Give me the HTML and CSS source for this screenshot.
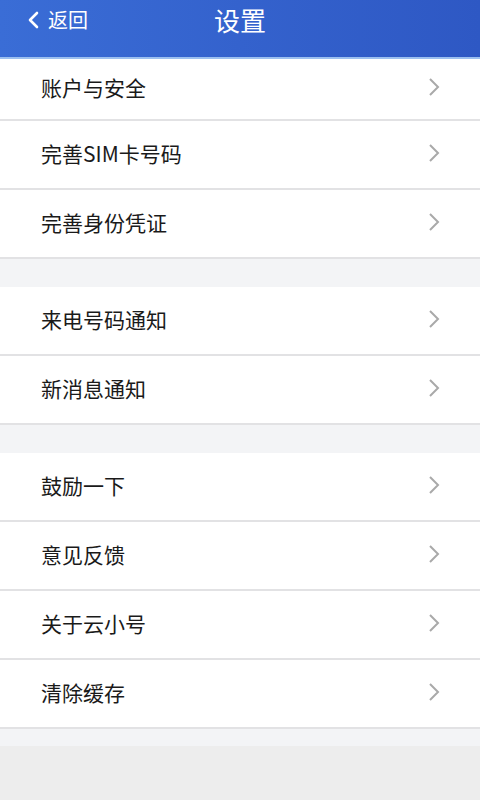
FILE: index.html
```html
<!DOCTYPE html>
<html lang="zh-CN">

<head>
    <meta charset="UTF-8" />
    <meta name="viewport" content="width=device-width, initial-scale=1.0" />
    <title>设置</title>
    <link rel="stylesheet" href="styles.css">
</head>

<body>
    <header class="topbar">
        <a class="back" href="#">
            <svg class="back-icon" width="12" height="18" viewBox="0 0 12 18">
                <path d="M10 2 L3 9 L10 16" fill="none" stroke="white" stroke-width="2.6" stroke-linecap="round" stroke-linejoin="round" />
            </svg>
            返回
        </a>
        <h1 class="title">设置</h1>
    </header>

    <!-- 第一组 -->
    <ul class="group group-first">
        <li class="item item-short"><span>账户与安全</span><svg class="arrow" viewBox="0 0 12 20"><path d="M2 2 L10 10 L2 18" /></svg></li>
        <li class="item"><span>完善SIM卡号码</span><svg class="arrow" viewBox="0 0 12 20"><path d="M2 2 L10 10 L2 18" /></svg></li>
        <li class="item"><span>完善身份凭证</span><svg class="arrow" viewBox="0 0 12 20"><path d="M2 2 L10 10 L2 18" /></svg></li>
    </ul>

    <ul class="group">
        <li class="item"><span>来电号码通知</span><svg class="arrow" viewBox="0 0 12 20"><path d="M2 2 L10 10 L2 18" /></svg></li>
        <li class="item"><span>新消息通知</span><svg class="arrow" viewBox="0 0 12 20"><path d="M2 2 L10 10 L2 18" /></svg></li>
    </ul>

    <ul class="group">
        <li class="item"><span>鼓励一下</span><svg class="arrow" viewBox="0 0 12 20"><path d="M2 2 L10 10 L2 18" /></svg></li>
        <li class="item"><span>意见反馈</span><svg class="arrow" viewBox="0 0 12 20"><path d="M2 2 L10 10 L2 18" /></svg></li>
        <li class="item"><span>关于云小号</span><svg class="arrow" viewBox="0 0 12 20"><path d="M2 2 L10 10 L2 18" /></svg></li>
        <li class="item"><span>清除缓存</span><svg class="arrow" viewBox="0 0 12 20"><path d="M2 2 L10 10 L2 18" /></svg></li>
    </ul>

    <div class="bottom-strip"></div>
</body>

</html>
```

FILE: styles.css
```css
html,
body {
    margin: 0;
    padding: 0;
    background-color: #ededed;
    font-family: "Noto Sans CJK SC", "Noto Sans", sans-serif;
}

.topbar {
    position: relative;
    height: 57px;
    background: linear-gradient(90deg, #3a6dd6 0%, #3462cd 50%, #2e58c4 100%);
    border-bottom: 2px solid #9cc0f0;
    color: white;
}

.back {
    position: absolute;
    left: 27px;
    top: 5px;
    display: flex;
    align-items: center;
    gap: 9px;
    color: white;
    text-decoration: none;
    font-size: 20px;
}

.title {
    margin: 0;
    text-align: center;
    font-size: 26px;
    font-weight: normal;
    line-height: 40px;
}

.group {
    list-style: none;
    margin: 0;
    padding: 0;
    background-color: #f3f4f6;
    padding-top: 28px;
}

.group-first {
    padding-top: 0;
}

.item {
    display: flex;
    align-items: center;
    justify-content: space-between;
    height: 63px;
    padding: 0 40px 4px 41px;
    background-color: white;
    border-bottom: 2px solid #e2e2e4;
    font-size: 21px;
    color: #1a1a1a;
}

.item-short {
    height: 56px;
}

.arrow {
    width: 12px;
    height: 20px;
    fill: none;
    stroke: #a9a9a9;
    stroke-width: 2;
}

.bottom-strip {
    height: 17px;
    background-color: #f3f4f6;
}
```
